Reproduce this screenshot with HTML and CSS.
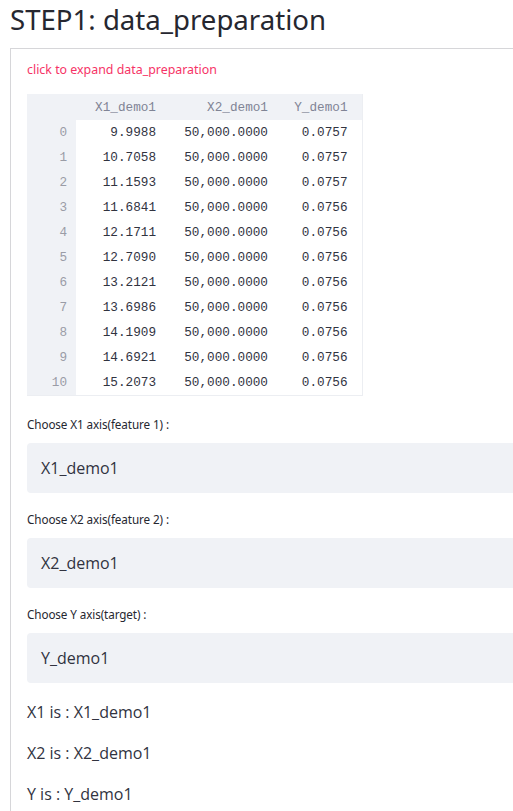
FILE: index.html
```html
<!DOCTYPE html>
<html>
<head>
<meta charset="utf-8">
<link rel="stylesheet" href="styles.css">
</head>
<body>
<h1 class="title">STEP1: data_preparation</h1>
<section class="expander">
  <div class="exp-header">click to expand data_preparation</div>
  <table class="df">
    <thead>
      <tr><th class="idx"></th><th class="c1">X1_demo1</th><th class="c2">X2_demo1</th><th class="c3">Y_demo1</th></tr>
    </thead>
    <tbody>
      <tr><th class="idx">0</th><td>9.9988</td><td>50,000.0000</td><td>0.0757</td></tr>
      <tr><th class="idx">1</th><td>10.7058</td><td>50,000.0000</td><td>0.0757</td></tr>
      <tr><th class="idx">2</th><td>11.1593</td><td>50,000.0000</td><td>0.0757</td></tr>
      <tr><th class="idx">3</th><td>11.6841</td><td>50,000.0000</td><td>0.0756</td></tr>
      <tr><th class="idx">4</th><td>12.1711</td><td>50,000.0000</td><td>0.0756</td></tr>
      <tr><th class="idx">5</th><td>12.7090</td><td>50,000.0000</td><td>0.0756</td></tr>
      <tr><th class="idx">6</th><td>13.2121</td><td>50,000.0000</td><td>0.0756</td></tr>
      <tr><th class="idx">7</th><td>13.6986</td><td>50,000.0000</td><td>0.0756</td></tr>
      <tr><th class="idx">8</th><td>14.1909</td><td>50,000.0000</td><td>0.0756</td></tr>
      <tr><th class="idx">9</th><td>14.6921</td><td>50,000.0000</td><td>0.0756</td></tr>
      <tr><th class="idx">10</th><td>15.2073</td><td>50,000.0000</td><td>0.0756</td></tr>
    </tbody>
  </table>

  <div class="field">
    <div class="label">Choose X1 axis(feature 1) :</div>
    <div class="select">X1_demo1</div>
  </div>
  <div class="field">
    <div class="label">Choose X2 axis(feature 2) :</div>
    <div class="select">X2_demo1</div>
  </div>
  <div class="field">
    <div class="label">Choose Y axis(target) :</div>
    <div class="select">Y_demo1</div>
  </div>

  <p class="out">X1 is : X1_demo1</p>
  <p class="out">X2 is : X2_demo1</p>
  <p class="out">Y is : Y_demo1</p>
</section>
</body>
</html>
```
FILE: styles.css
```css
html, body {
  margin: 0;
  padding: 0;
  background: #ffffff;
  overflow: hidden;
}
body {
  font-family: "Open Sans", "Noto Sans", sans-serif;
  color: #262730;
  width: 513px;
  height: 811px;
}
.title {
  margin: 0;
  padding: 1px 0 0 10px;
  height: 48px;
  box-sizing: border-box;
  font-family: "Noto Sans", sans-serif;
  font-weight: 400;
  font-size: 27.6px;
  line-height: 36px;
  color: #262730;
}
.expander {
  margin-left: 10px;
  width: 640px;
  border-top: 1px solid #d6d6d9;
  border-left: 1px solid #d6d6d9;
  padding: 11px 0 0 16px;
  box-sizing: border-box;
  height: 900px;
}
.exp-header {
  color: #f63366;
  font-family: "Noto Sans", sans-serif;
  font-size: 12.4px;
  line-height: 20px;
  height: 20px;
  margin-bottom: 14px;
}
.df {
  border-collapse: collapse;
  table-layout: fixed;
  font-family: "Liberation Mono", monospace;
  font-size: 12.7px;
  color: #31333f;
  border-right: 1px solid #eceef2;
  border-bottom: 1px solid #eceef2;
}
.df th, .df td {
  height: 25px;
  padding: 0 14px 0 0;
  text-align: right;
  font-weight: 400;
  white-space: nowrap;
  box-sizing: border-box;
}
.df thead th {
  background: #f0f2f6;
  color: #808495;
  height: 26px;
}
.df th.idx {
  background: #f0f2f6;
  color: #9a9ca6;
  width: 49px;
  padding-right: 9px;
}
.df .c1 { width: 94px; }
.df .c2 { width: 112px; }
.df .c3 { width: 80px; }

.field {
  margin-top: 19px;
}
.field + .field {
  margin-top: 17px;
}
.label {
  font-family: "Noto Sans", sans-serif;
  font-size: 11.7px;
  line-height: 18px;
  color: #262730;
  letter-spacing: -0.1px;
  margin-bottom: 10px;
}
.select {
  height: 50px;
  background: #f0f2f6;
  border-radius: 4px;
  padding-left: 14px;
  line-height: 50px;
  font-size: 16px;
  color: #31333f;
}
.out {
  margin: 18px 0 0 0;
  font-size: 16px;
  line-height: 22px;
  color: #31333f;
}
.out + .out {
  margin-top: 19px;
}
```
